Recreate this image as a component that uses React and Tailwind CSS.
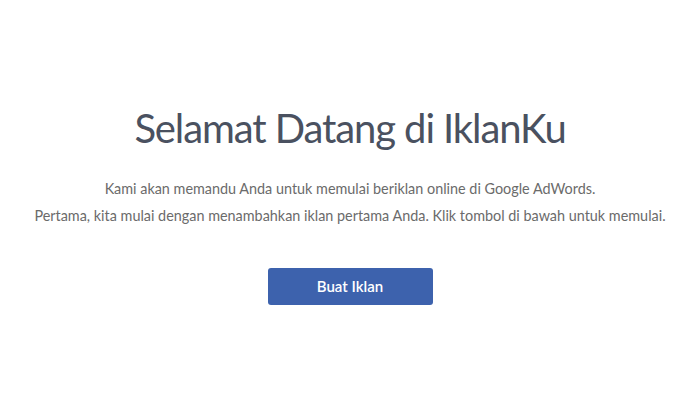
import React from 'react';

export default function App() {
    return (
        <div className="w-[700px] h-[400px] bg-white flex flex-col items-center pt-[102px] font-['Lato',sans-serif]">
            <h1 className="text-[40px] leading-[52px] text-[#4a5160] tracking-[-1.1px]">Selamat Datang di IklanKu</h1>
            <div className="mt-[21px] text-center text-[14.4px] leading-[27px] text-[#6b6b6b]">
                <p>Kami akan memandu Anda untuk memulai beriklan online di Google AdWords.</p>
                <p>Pertama, kita mulai dengan menambahkan iklan pertama Anda. Klik tombol di bawah untuk memulai.</p>
            </div>
            <button className="mt-[39px] w-[165px] h-[37px] rounded-[3px] bg-[#3d62ad] text-white text-[15px] font-semibold">
                Buat Iklan
            </button>
        </div>
    );
}
